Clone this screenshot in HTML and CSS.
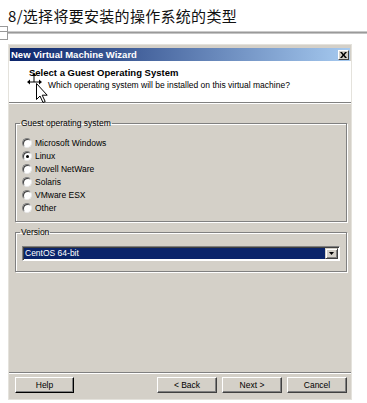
FILE: index.html
```html
<html>
    <head>
        <title>New Virtual Machine Wizard</title>
        <link rel="stylesheet" href="styles.css">
    </head>
    <body>
        <h1 class="page-title">8/选择将要安装的操作系统的类型</h1>
        <div class="rule"><span class="handle"></span></div>
        <div class="dialog">
            <div class="titlebar">
                <span class="title-text">New Virtual Machine Wizard</span>
                <span class="close">
                    <svg width="7" height="6" viewBox="0 0 7 6"><path d="M0 0h2l1.5 2 1.5-2h2l-2.5 3 2.5 3h-2l-1.5-2-1.5 2h-2l2.5-3z" fill="#000"/></svg>
                </span>
            </div>
            <div class="header">
                <div class="header-title">Select a Guest Operating System</div>
                <div class="header-sub">Which operating system will be installed on this virtual machine?</div>
                <svg class="cursor" width="22" height="33" viewBox="0 0 22 33">
                    <path d="M7 4v6M1.5 10h11" stroke="#000" stroke-width="1" fill="none"/>
                    <path d="M7 1l2.5 3h-5z M0 10l3-2.5v5z M15 10l-3-2.5v5z" fill="#000"/>
                    <path d="M9.5 11.5v16l3.5-3.5 3 6.5 2.2-1-3-6.3h5z" fill="#fff" stroke="#000" stroke-width="1" stroke-linejoin="miter"/>
                </svg>
            </div>
            <div class="content">
                <fieldset class="group">
                    <legend>Guest operating system</legend>
                    <div class="option"><span class="radio"></span>Microsoft Windows</div>
                    <div class="option"><span class="radio checked"></span>Linux</div>
                    <div class="option"><span class="radio"></span>Novell NetWare</div>
                    <div class="option"><span class="radio"></span>Solaris</div>
                    <div class="option"><span class="radio"></span>VMware ESX</div>
                    <div class="option"><span class="radio"></span>Other</div>
                </fieldset>
                <fieldset class="group version">
                    <legend>Version</legend>
                    <div class="select">
                        <span class="select-value">CentOS 64-bit</span>
                        <span class="select-btn">
                            <svg width="5" height="3" viewBox="0 0 5 3"><path d="M0 0h5l-2.5 3z" fill="#000"/></svg>
                        </span>
                    </div>
                </fieldset>
            </div>
            <div class="footer">
                <button class="btn help">Help</button>
                <span class="spacer"></span>
                <button class="btn">&lt; Back</button>
                <button class="btn">Next &gt;</button>
                <button class="btn">Cancel</button>
            </div>
        </div>
    </body>
</html>
```
FILE: styles.css
```css
* {
    box-sizing: border-box;
}
body {
    margin: 0;
    background-color: #fff;
    color: #000;
    font-family: "Liberation Sans", Arial, sans-serif;
    font-size: 8.5px;
}
.page-title {
    margin: 0;
    padding: 6px 0 0 8px;
    height: 26px;
    line-height: 20px;
    font-family: "Noto Sans CJK SC", sans-serif;
    font-size: 15px;
    font-weight: normal;
    letter-spacing: 0.3px;
    color: #111;
}
.rule {
    position: relative;
    margin-top: 5px;
    height: 3px;
    background: linear-gradient(#e2e2e2, #9a9a9a, #d8d8d8);
}
.handle {
    position: absolute;
    left: 0;
    top: -5px;
    width: 8px;
    height: 14px;
    border: 1px solid #999;
    border-left: none;
    background-color: #fff;
}
.handle::after {
    content: "";
    position: absolute;
    left: 0;
    right: 0;
    top: 4px;
    border-top: 1px solid #999;
}
.dialog {
    margin: 10px 0 0 8px;
    width: 344px;
    height: 356px;
    display: flex;
    flex-direction: column;
    border: 1px solid #e4e2dc;
    padding-top: 3px;
    background-color: #d4d0c8;
}
.titlebar {
    height: 13px;
    margin: 0 1px;
    display: flex;
    align-items: center;
    justify-content: space-between;
    background: linear-gradient(to right, #0a246a, #a6caf0);
}
.title-text {
    padding-left: 1px;
    color: #fff;
    font-size: 9.5px;
    font-weight: bold;
}
.close {
    width: 11px;
    height: 10px;
    margin-right: 1px;
    display: flex;
    align-items: center;
    justify-content: center;
    background-color: #d4d0c8;
    border: 1px solid;
    border-color: #fff #404040 #404040 #fff;
}
.header {
    position: relative;
    height: 42px;
    padding-top: 6px;
    background-color: #fff;
    border-bottom: 1px solid #808080;
    box-shadow: 0 1px 0 #fff;
}
.header-title {
    padding-left: 20px;
    line-height: 11px;
    font-size: 9.5px;
    font-weight: bold;
}
.header-sub {
    margin-top: 2px;
    padding-left: 39px;
    line-height: 11px;
}
.cursor {
    position: absolute;
    left: 18px;
    top: 11px;
    overflow: visible;
}
.content {
    flex: 1;
    padding-top: 15px;
}
.group {
    margin: 0 4px 0 6px;
    padding: 7px 6px 7px 6px;
    min-width: 0;
    border: 1px solid #808080;
    box-shadow: inset 1px 1px 0 #fff, 1px 1px 0 #fff;
}
.group legend {
    margin-left: -2px;
    padding: 0 1px;
    line-height: 11px;
}
.option {
    height: 13px;
    display: flex;
    align-items: center;
}
.radio {
    position: relative;
    width: 10px;
    height: 10px;
    margin-right: 3px;
    border-radius: 50%;
    background-color: #fff;
    border: 1px solid;
    border-color: #808080 #e8e8e8 #e8e8e8 #808080;
    box-shadow: inset 1px 1px 0 #404040;
}
.radio.checked::after {
    content: "";
    position: absolute;
    left: 3px;
    top: 3px;
    width: 3px;
    height: 3px;
    border-radius: 50%;
    background-color: #000;
}
.version {
    margin-top: 5px;
    padding-top: 8px;
    padding-bottom: 10px;
}
.select {
    height: 15px;
    display: flex;
    padding: 1px;
    border: 1px solid;
    border-color: #808080 #fff #fff #808080;
    box-shadow: inset 1px 1px 0 #404040;
    background-color: #fff;
}
.select-value {
    flex: 1;
    padding-left: 1px;
    line-height: 11px;
    color: #fff;
    background-color: #0a246a;
}
.select-btn {
    width: 13px;
    display: flex;
    align-items: center;
    justify-content: center;
    background-color: #d4d0c8;
    border: 1px solid;
    border-color: #d4d0c8 #404040 #404040 #d4d0c8;
    box-shadow: inset 1px 1px 0 #fff, inset -1px -1px 0 #808080;
}
.footer {
    height: 27px;
    display: flex;
    align-items: flex-start;
    gap: 5px;
    padding: 4px 4px 0 6px;
    border-top: 1px solid #808080;
    box-shadow: inset 0 1px 0 #fff;
}
.spacer {
    flex: 1;
}
.btn {
    width: 60px;
    height: 16px;
    padding: 0;
    font-family: inherit;
    font-size: 8.5px;
    color: #000;
    background-color: #d4d0c8;
    border: 1px solid;
    border-color: #fff #404040 #404040 #fff;
    box-shadow: inset -1px -1px 0 #808080;
}
.help {
    width: 59px;
    border-color: #fff #000 #000 #fff;
}
```
